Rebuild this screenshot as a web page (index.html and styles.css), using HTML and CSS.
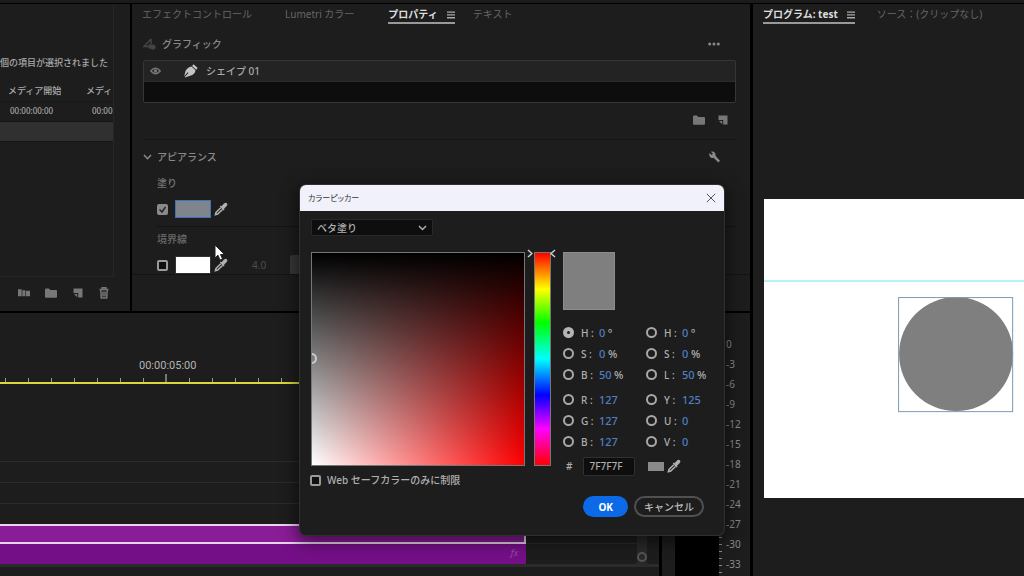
FILE: index.html
```html
<!DOCTYPE html>
<html lang="ja">
<head>
<meta charset="utf-8">
<title>カラーピッカー</title>
<link rel="stylesheet" href="styles.css">
</head>
<body>
<svg class="defs" aria-hidden="true">
  <symbol id="folder" viewBox="0 0 12 10"><path d="M0 1.5Q0 .5 1 .5h3l1.200 1.400H11q1 0 1 1V9q0 .8-1 .8H1Q0 9.800 0 9z"/></symbol>
  <symbol id="newitem" viewBox="0 0 10 10"><path d="M.5.5h9v9H5.200V5H.5zM1 6h3.200v3.200z"/></symbol>
  <symbol id="dropper" viewBox="0 0 14 14"><path d="M7.500 4.200 10 1.500Q11.500.2 12.800 1.300T12.500 4.200L10 6.700l.6.8-1 1L5.800 4.600l1-1z"/><path class="line" d="M6.800 5.800 2 10.500l-.6 2.200 2.300-.6L8.500 7.500"/></symbol>
  <symbol id="menu" viewBox="0 0 8 8"><path d="M0 .5h8v1.300H0zM0 3.300h8v1.300H0zM0 6.100h8v1.300H0z"/></symbol>
</svg>

<div class="app">
  <div class="left">
    <div class="upper">
      <section class="panel project">
        <div class="project-list">
          <p class="selected-note">個の項目が選択されました</p>
          <table class="clips">
            <thead><tr><th>メディア開始</th><th>メディ</th></tr></thead>
            <tbody>
              <tr><td>00:00:00:00</td><td>00:00</td></tr>
              <tr class="picked"><td></td><td></td></tr>
            </tbody>
          </table>
        </div>
        <div class="project-tools">
          <button aria-label="シーケンスへオートメーション"><svg viewBox="0 0 13 10"><path d="M0 1h4v7.500H0zM4.700 2H8v6.500H4.700zM8.700 2.500H13v6H8.700z"/></svg></button>
          <button aria-label="新規ビン"><svg viewBox="0 0 12 10"><use href="#folder"/></svg></button>
          <button aria-label="新規項目"><svg viewBox="0 0 10 10"><use href="#newitem"/></svg></button>
          <button aria-label="消去"><svg class="trash" viewBox="0 0 10 12"><path class="line" d="M.5 2.500h9M3.200 2V.8h3.600V2M1.800 3l.5 8h5.400l.5-8M4 4.500v5M6 4.500v5"/></svg></button>
        </div>
      </section>

      <section class="panel properties">
        <nav class="tabs">
          <button class="tab">エフェクトコントロール</button>
          <button class="tab lumetri">Lumetri カラー</button>
          <button class="tab active">プロパティ<svg class="menu"><use href="#menu"/></svg></button>
          <button class="tab text-tab">テキスト</button>
        </nav>
        <div class="props-body">
          <header class="group-head">
            <svg class="graphic-icon" viewBox="0 0 13 12"><path class="line" d="M8 1 1 8.500h5M8 1v5"/><path d="M5.500 6.500h4v4h-4z"/><circle cx="10" cy="9" r="2.600"/></svg>
            <h2>グラフィック</h2>
            <button class="more" aria-label="その他"><svg viewBox="0 0 12 4"><circle cx="1.700" cy="2" r="1.500"/><circle cx="6" cy="2" r="1.500"/><circle cx="10.300" cy="2" r="1.500"/></svg></button>
          </header>
          <ul class="layers">
            <li class="layer">
              <svg class="eye" viewBox="0 0 11 8"><path class="line" d="M.8 4Q5.500-1.500 10.200 4 5.500 9.500.8 4z"/><circle cx="5.500" cy="4" r="1.700"/></svg>
              <svg class="pen" viewBox="0 0 14 14"><path d="M9.500.3 13.700 4l-1.600 1.800-4-3.700zM7.500 2.500l4 3.700Q11 10.500 6 11.800L1 13.600.7 13 4.500 9l-.8-.8L.2 12.200 1.500 7Q3.500 3 7.500 2.500z"/></svg>
              <span>シェイプ 01</span>
            </li>
            <li class="layer-empty"></li>
          </ul>
          <div class="layer-tools">
            <button aria-label="グループ"><svg class="wide" viewBox="0 0 12 10"><use href="#folder"/></svg></button>
            <button aria-label="新規レイヤー"><svg viewBox="0 0 10 10"><use href="#newitem"/></svg></button>
          </div>
          <header class="appearance-head">
            <svg class="chev" viewBox="0 0 9 6"><path class="line" d="m1 1 3.500 3.700L8 1"/></svg>
            <h2>アピアランス</h2>
            <button class="wrench" aria-label="設定"><svg viewBox="0 0 12 12"><path d="M.5 1.500 3 3.800 4.300 2.500 2 .3Q5-.5 6.500 1.600q1 1.500.5 3L12 10l-1.800 1.900L5 6.700Q2.500 7.500 1.200 6T.5 1.500z"/></svg></button>
          </header>
          <div class="appearance">
            <h3>塗り</h3>
            <div class="paint-row">
              <input type="checkbox" class="check" checked aria-label="塗り">
              <button class="swatch fill-swatch" aria-label="塗りの色"></button>
              <button class="pick" aria-label="スポイト"><svg><use href="#dropper"/></svg></button>
            </div>
            <h3 class="stroke-title">境界線</h3>
            <div class="paint-row">
              <input type="checkbox" class="check" aria-label="境界線">
              <button class="swatch" aria-label="境界線の色"></button>
              <button class="pick" aria-label="スポイト"><svg><use href="#dropper"/></svg></button>
              <span class="stroke-width">4.0</span>
              <button class="stroke-type" aria-label="線の種類"></button>
            </div>
          </div>
        </div>
      </section>
    </div>

    <div class="lower">
      <section class="panel timeline">
        <div class="ruler"><time>00:00:05:00</time><div class="ticks"></div></div>
        <div class="tracks">
          <div class="lanes">
            <div class="lane first"></div>
            <div class="lane"></div>
            <div class="lane"></div>
            <div class="lane last"></div>
            <div class="clip-lane"><div class="clip selected"></div></div>
            <div class="clip-lane audio"><div class="clip"><i>fx</i></div></div>
          </div>
          <div class="scroll"><span></span></div>
        </div>
        <div class="split"></div>
      </section>
      <section class="panel meters">
        <div class="meter"></div>
        <div class="meter-ticks"></div>
        <ol class="scale"><li>0</li><li>-3</li><li>-6</li><li>-9</li><li>-12</li><li>-15</li><li>-18</li><li>-21</li><li>-24</li><li>-27</li><li>-30</li><li>-33</li></ol>
      </section>
    </div>
  </div>

  <section class="panel program">
    <nav class="tabs">
      <button class="tab active">プログラム: test<svg class="menu"><use href="#menu"/></svg></button>
      <button class="tab source">ソース：(クリップなし)</button>
    </nav>
    <svg class="stage" viewBox="0 0 260 299">
      <rect width="260" height="299" fill="#fff"/>
      <rect y="81" width="260" height="2" fill="#b4f2f7"/>
      <circle cx="192" cy="155" r="57" fill="#7f7f7f"/>
      <rect x="134.500" y="98.500" width="114" height="114" fill="none" stroke="#7b9ab5"/>
    </svg>
  </section>
</div>

<div class="dialog" role="dialog" aria-labelledby="dlg-title">
  <header class="titlebar">
    <h1 id="dlg-title">カラーピッカー</h1>
    <button class="close" aria-label="閉じる"><svg viewBox="0 0 10 10"><path class="line" d="m.8.8 8.400 8.400M9.200.8.8 9.200"/></svg></button>
  </header>
  <div class="dialog-body">
    <div class="select-wrap">
      <select aria-label="塗りの種類"><option>ベタ塗り</option></select>
      <svg viewBox="0 0 9 6"><path class="line" d="m1 1 3.500 3.500L8 1"/></svg>
    </div>
    <div class="picker">
      <div class="field"><span class="ring"></span></div>
      <div class="hue">
        <svg class="arrow from" viewBox="0 0 6 9"><path class="line" d="m1 1 4 3.500L1 8"/></svg>
        <svg class="arrow to" viewBox="0 0 6 9"><path class="line" d="M5 1 1 4.500 5 8"/></svg>
      </div>
      <div class="values">
        <div class="preview"></div>
        <div class="channels">
          <div class="channel"><label><input type="radio" name="ch" checked><span>H :</span></label><input class="num one" value="0" aria-label="H"><span>º</span></div>
          <div class="channel"><label><input type="radio" name="ch"><span>H :</span></label><input class="num one" value="0" aria-label="H (HSL)"><span>º</span></div>
          <div class="channel"><label><input type="radio" name="ch"><span>S :</span></label><input class="num one" value="0" aria-label="S"><span>%</span></div>
          <div class="channel"><label><input type="radio" name="ch"><span>S :</span></label><input class="num one" value="0" aria-label="S (HSL)"><span>%</span></div>
          <div class="channel"><label><input type="radio" name="ch"><span>B :</span></label><input class="num two" value="50" aria-label="明度"><span>%</span></div>
          <div class="channel"><label><input type="radio" name="ch"><span>L :</span></label><input class="num two" value="50" aria-label="L"><span>%</span></div>
        </div>
        <div class="channels">
          <div class="channel"><label><input type="radio" name="ch"><span>R :</span></label><input class="num" value="127" aria-label="R"></div>
          <div class="channel"><label><input type="radio" name="ch"><span>Y :</span></label><input class="num" value="125" aria-label="Y"></div>
          <div class="channel"><label><input type="radio" name="ch"><span>G :</span></label><input class="num" value="127" aria-label="G"></div>
          <div class="channel"><label><input type="radio" name="ch"><span>U :</span></label><input class="num" value="0" aria-label="U"></div>
          <div class="channel"><label><input type="radio" name="ch"><span>B :</span></label><input class="num" value="127" aria-label="B"></div>
          <div class="channel"><label><input type="radio" name="ch"><span>V :</span></label><input class="num" value="0" aria-label="V"></div>
        </div>
        <div class="hex-row">
          <label for="hex">#</label><input id="hex" value="7F7F7F">
          <span class="mini"></span>
          <button class="pick" aria-label="スポイト"><svg><use href="#dropper"/></svg></button>
        </div>
      </div>
      <label class="web"><input type="checkbox" class="check"><span>Web セーフカラーのみに制限</span></label>
    </div>
    <footer><button class="btn ok">OK</button><button class="btn">キャンセル</button></footer>
  </div>
</div>

<svg class="cursor" viewBox="0 0 11 17"><path d="M1 1v13l3-2.800L6 16l2.500-1-2-4.500h4z" fill="#fff" stroke="#222"/></svg>
</body>
</html>
```
FILE: styles.css
```css
* { box-sizing: border-box; margin: 0; padding: 0; }
body {
  background: #000;
  color: #9a9a9a;
  font: 10px/16px "Noto Sans", "Noto Sans CJK JP", sans-serif;
  overflow: hidden;
}
button, input, select { font: inherit; color: inherit; background: none; border: 0; appearance: none; }
button { display: flex; align-items: center; justify-content: center; }
h1, h2, h3 { font-size: inherit; font-weight: 500; }
ul, ol { list-style: none; }
svg { display: block; fill: currentColor; flex: none; }
.line { fill: none; stroke: currentColor; stroke-width: 1.5; }
.defs { position: absolute; width: 0; height: 0; }

.app {
  display: grid;
  grid-template-columns: minmax(0, 750fr) minmax(0, 271fr);
  gap: 3px;
  height: 100vh;
  border-top: 3px solid #1b1b1b;
  padding-top: 1px;
}
.panel { background: #1d1d1d; min-width: 0; overflow: hidden; }
.left { display: flex; flex-direction: column; gap: 2px; min-height: 0; }
.upper { display: grid; grid-template-columns: 130px minmax(0, 1fr); gap: 2px; height: 307px; }
.lower { display: grid; grid-template-columns: minmax(0, 1fr) 88px; gap: 3px; flex: 1; min-height: 0; }

/* Project */
.project { display: flex; flex-direction: column; }
.project-list {
  width: 114px;
  height: 273px;
  padding-top: 51px;
  overflow: hidden;
  border-right: 1px solid #262626;
  border-bottom: 1px solid #262626;
}
.selected-note { white-space: nowrap; font-size: 9px; font-weight: 500; color: #aaa; }
.clips { table-layout: fixed; width: 100%; margin-top: 10px; border-collapse: collapse; color: #aaa; }
.clips th, .clips td { padding: 0 0 0 8px; text-align: left; white-space: nowrap; }
.clips th { width: 82px; font-size: 9px; font-weight: 500; height: 20px; border-bottom: 1px solid #191919; }
.clips td { font-size: 8px; font-weight: 500; padding-left: 10px; height: 20px; border-bottom: 1px solid #151515; }
.clips th + th { width: auto; padding-left: 4px; }
.clips td + td { padding-left: 10px; }
.clips .picked { background: #303030; }
.project-tools { display: flex; gap: 15px; padding: 10px 0 0 18px; color: #777; }
.project-tools svg { width: 12px; height: 10px; }
.project-tools .trash { width: 10px; height: 12px; }

/* Tabs */
.tabs { display: flex; height: 20px; padding: 2px 10px 0; }
.tab { height: 18px; color: #666; white-space: nowrap; border-bottom: 2px solid transparent; }
.tab.active { color: #ddd; font-weight: 700; border-color: #999; }
.menu { width: 8px; height: 8px; margin: 2px 0 0 9px; color: #aaa; }
.lumetri { margin-left: 33px; }
.properties .tab.active { margin-left: 34px; }
.text-tab { margin-left: 18px; }
.source { margin-left: 22px; }

/* Properties */
.properties { display: flex; flex-direction: column; border-bottom: 36px solid #1d1d1d; }
.props-body { flex: 1; min-height: 0; padding: 12px 14px 0 11px; overflow: hidden; border-bottom: 1px solid #131313; }
.group-head { display: flex; align-items: center; gap: 6px; height: 16px; color: #8a8a8a; }
.graphic-icon { width: 13px; height: 12px; color: #444; }
.more { margin-left: auto; padding-right: 16px; }
.more svg { width: 12px; height: 4px; }
.layers { margin-top: 8px; border: 1px solid #363636; border-radius: 2px; background: #0d0d0d; }
.layer { display: flex; align-items: center; height: 21px; padding-left: 6px; background: #232323; border-bottom: 1px solid #2c2c2c; color: #aaa; font-weight: 500; }
.layer-empty { height: 20px; }
.eye { width: 11px; height: 8px; color: #777; }
.pen { width: 14px; height: 14px; margin: 0 8px 0 23px; color: #c4c4c4; }
.layer-tools { display: flex; justify-content: flex-end; gap: 13px; height: 37px; padding: 0 8px 2px 0; color: #777; border-bottom: 1px solid #141414; }
.layer-tools svg { width: 10px; height: 10px; }
.layer-tools .wide { width: 12px; }
.appearance-head { display: flex; align-items: center; gap: 5px; height: 34px; color: #8a8a8a; }
.chev { width: 9px; height: 6px; }
.wrench { margin-left: auto; padding-right: 16px; }
.wrench svg { width: 11px; height: 12px; }
.appearance { padding-left: 14px; color: #777; }
.appearance h3 { height: 18px; line-height: 18px; }
.paint-row { display: flex; align-items: center; height: 34px; }
.appearance .stroke-title { border-top: 1px solid #131313; height: 22px; line-height: 24px; color: #6a6a6a; }
.check { width: 11px; height: 11px; border: 2px solid #9a9a9a; border-radius: 2px; background: #101010; }
.paint-row .check:checked {
  border-color: #8a8a8a;
  background: #8a8a8a url("data:image/svg+xml,%3Csvg xmlns='http://www.w3.org/2000/svg' viewBox='0 0 7 7'%3E%3Cpath d='M.5 3.500 3 6l3.500-5' fill='none' stroke='%23222' stroke-width='1.500'/%3E%3C/svg%3E") center / 7px 7px no-repeat;
}
.swatch { width: 36px; height: 18px; margin-left: 7px; background: #fff; border: 1px solid #333; }
.fill-swatch { background: #7f858c; border: 1px solid #3d74b8; }
.pick { margin-left: 3px; color: #b0b0b0; }
.pick svg { width: 14px; height: 14px; }
.pick .line { stroke-width: 1; }
.stroke-width { margin-left: 24px; color: #4c4c4c; }
.stroke-type { width: 40px; height: 20px; margin-left: 24px; background: #383838; border-radius: 3px; }

/* Timeline */
.timeline { display: flex; flex-direction: column; }
.ruler { height: 71px; padding-top: 45px; border-bottom: 2px solid #d8d83a; }
.ruler time { display: block; margin-left: 139px; font: 11px/16px Roboto, sans-serif; color: #b5b5b5; }
.ticks {
  height: 8px;
  background:
    linear-gradient(#777, #777) 165px 0 / 2px 8px no-repeat,
    repeating-linear-gradient(to right, #999 0 1px, transparent 1px 23px) 5px 4px / 100% 4px no-repeat;
}
.tracks { display: flex; flex: 1; min-height: 0; }
.lanes { flex: 1; }
.lane { height: 21px; border-bottom: 1px solid #2b2b2b; }
.lane.first { height: 78px; }
.lane.last { height: 20px; border: 0; }
.clip-lane { height: 20px; border-bottom: 1px solid #2b2b2b; }
.clip { width: calc(100% - 111px); height: 20px; background: #750f87; text-align: right; padding-right: 8px; line-height: 18px; color: #9a4aa8; font-size: 9px; }
.clip.selected { background: #8a1c98; border: 2px solid #e8d5ec; border-left: 0; }
.clip-lane.audio { height: 21px; }
.scroll { width: 10px; margin-right: 12px; background: #292929; display: flex; align-items: flex-end; }
.scroll span { width: 10px; height: 10px; margin-bottom: 2px; border: 2px solid #555; border-radius: 50%; }
.split { height: 12px; border-top: 3px solid #2b2b2b; }

.meters { display: grid; grid-template-columns: 44px 3px 1fr; padding-left: 13px; }
.meter { background: #000; }
.meter-ticks { background: repeating-linear-gradient(#888 0 1px, transparent 1px 7px); }
.scale { padding: 21px 0 0 4px; color: #8a8a8a; line-height: 20px; }

/* Program */
.stage { width: 96%; height: auto; margin: 175px 0 0 auto; }

/* Color picker window */
.dialog {
  position: absolute;
  left: 300px;
  top: 185px;
  width: 424px;
  border-radius: 6px;
  background: #1d1d1d;
  box-shadow: 0 0 0 1px #303030, 0 4px 16px 3px rgba(0, 0, 0, .55);
  color: #b0b0b0;
  overflow: hidden;
}
.titlebar { display: flex; align-items: center; justify-content: space-between; height: 26px; padding: 0 8px; background: #f0f1fa; color: #333; }
.titlebar h1 { font-size: 8px; font-weight: 400; font-feature-settings: "palt"; }
.close svg { width: 10px; height: 10px; color: #555; }
.close .line { stroke-width: 1; }
.dialog-body { padding: 8px 20px 18px 11px; }
.select-wrap { display: grid; align-items: center; width: 122px; }
.select-wrap > * { grid-area: 1 / 1; }
.select-wrap select { height: 17px; padding-left: 5px; background: #0e0e0e; border: 1px solid #292929; border-radius: 2px; font-weight: 500; }
.select-wrap svg { justify-self: end; width: 9px; height: 6px; margin-right: 6px; pointer-events: none; }
.picker {
  display: grid;
  grid-template-columns: 214px 17px minmax(0, 1fr);
  grid-template-rows: 214px 16px;
  gap: 6px 9px;
  margin-top: 16px;
}
.field {
  position: relative;
  overflow: hidden;
  border: 1px solid #777;
  background: linear-gradient(#000, transparent), linear-gradient(to right, #fff, #f00);
}
.ring { position: absolute; left: -6px; top: 100px; width: 11px; height: 11px; border: 2px solid #ccc; border-radius: 50%; }
.hue {
  position: relative;
  border: 1px solid #777;
  background: linear-gradient(#f00, #ff0 17%, #0f0 33%, #0ff 50%, #00f 67%, #f0f 83%, #f00);
}
.arrow { position: absolute; top: -4px; width: 6px; height: 9px; color: #ccc; }
.arrow.from { left: -8px; }
.arrow.to { right: -6px; }
.values { grid-row: 1 / span 2; grid-column: 3; padding-left: 3px; }
.web { grid-column: 1; display: flex; align-items: center; gap: 6px; white-space: nowrap; font-weight: 500; }
.web .check { margin-left: -1px; }
.preview { width: 52px; height: 58px; margin-bottom: 12px; background: #7f7f7f; border: 1px solid #8c8c8c; }
.channels { display: grid; grid-template-columns: 83px 1fr; margin-bottom: 4px; }
.channel { display: flex; align-items: center; height: 21px; font-size: 11px; font-weight: 500; white-space: nowrap; }
.channel label { display: flex; align-items: center; gap: 7px; width: 36px; font-size: 10px; }
.channel [type="radio"] { width: 11px; height: 11px; border: 2px solid #a8a8a8; border-radius: 50%; }
.channel [type="radio"]:checked { border-width: 4px; border-color: #b5b5b5; }
.num { width: 22px; height: 16px; color: #4f7fc4; }
.num.one { width: 9px; }
.num.two { width: 15px; }
.hex-row { display: flex; align-items: center; height: 20px; padding-left: 3px; font-weight: 500; }
.hex-row input { width: 52px; height: 19px; margin-left: 11px; padding-left: 5px; background: #0e0e0e; border: 1px solid #303030; border-radius: 2px; }
.mini { width: 16px; height: 9px; margin-left: 13px; background: #8a8a8a; }
footer { display: flex; justify-content: flex-end; gap: 6px; margin-top: 8px; }
.btn { height: 21px; padding: 0 8px; border: 2px solid #505050; border-radius: 11px; font-weight: 500; color: #bbb; }
.btn.ok { padding: 0 13px; background: #0c6ae8; border-color: #0c6ae8; color: #fff; font-weight: 700; }

.cursor { position: absolute; left: 214px; top: 244px; width: 11px; height: 17px; }
```
